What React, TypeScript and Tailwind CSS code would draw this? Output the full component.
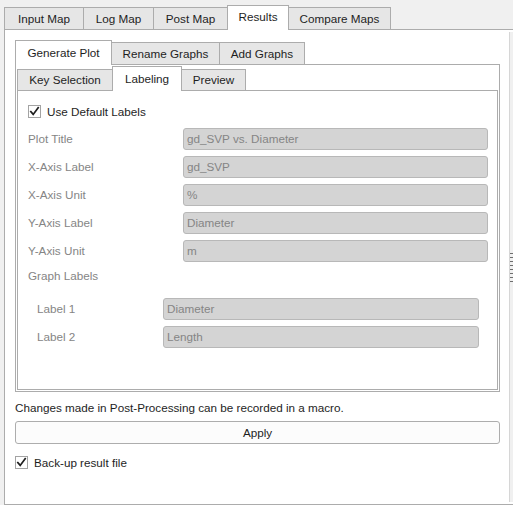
import React from "react";

function Check() {
  return (
    <div className="flex h-[13px] w-[13px] shrink-0 items-center justify-center border border-[#a3a3a3] bg-white">
      <svg width="11" height="11" viewBox="0 0 11 11" fill="none">
        <path d="M1.8 5.6 L4.2 8.4 L9.2 1.6" stroke="#1f1f1f" strokeWidth="1.7" strokeLinecap="square" />
      </svg>
    </div>
  );
}

function Field({ value, className }: { value: string; className: string }) {
  return (
    <div
      className={
        "flex h-[22px] items-center rounded-[3px] border border-[#b8b8b8] bg-[#d4d4d4] pl-[3px] text-[#858585] " +
        className
      }
    >
      {value}
    </div>
  );
}

const mainRows = [
  { label: "Plot Title", value: "gd_SVP vs. Diameter" },
  { label: "X-Axis Label", value: "gd_SVP" },
  { label: "X-Axis Unit", value: "%" },
  { label: "Y-Axis Label", value: "Diameter" },
  { label: "Y-Axis Unit", value: "m" },
];

const graphRows = [
  { label: "Label 1", value: "Diameter" },
  { label: "Label 2", value: "Length" },
];

export default function App() {
  return (
    <div className="h-[505px] w-[513px] overflow-hidden bg-[#f0f0f0] font-['Liberation_Sans',Arial,sans-serif] text-[11.7px] text-[#1e1e1e]">
      {/* top level tabs */}
      <div className="flex h-[29px] items-end pl-[4px]">
        <div className="flex h-[22px] w-[79px] items-center justify-center border-l border-t border-[#acacac] bg-[#e6e6e6]">
          Input Map
        </div>
        <div className="flex h-[22px] w-[70px] items-center justify-center border-l border-t border-[#acacac] bg-[#e6e6e6]">
          Log Map
        </div>
        <div className="flex h-[22px] w-[74px] items-center justify-center border-l border-t border-[#acacac] bg-[#e6e6e6]">
          Post Map
        </div>
        <div className="relative z-10 -mb-px flex h-[25px] w-[62px] items-center justify-center border-x border-t border-[#acacac] bg-white pb-[2px]">
          Results
        </div>
        <div className="flex h-[22px] w-[102px] items-center justify-center border-r border-t border-[#acacac] bg-[#e6e6e6]">
          Compare Maps
        </div>
      </div>

      <div className="ml-[4px] flex h-[476px] border-b border-l border-t border-[#acacac] bg-white">
        <div className="w-[504px] pl-[10px] pt-[10px]">
          {/* second level tabs */}
          <div className="flex h-[24px] items-end">
            <div className="relative z-10 -mb-px flex h-[25px] w-[97px] items-center justify-center border-x border-t border-[#acacac] bg-white pb-[1px]">
              Generate Plot
            </div>
            <div className="flex h-[22px] w-[108px] items-center justify-center border-r border-t border-[#acacac] bg-[#e6e6e6]">
              Rename Graphs
            </div>
            <div className="flex h-[22px] w-[85px] items-center justify-center border-r border-t border-[#acacac] bg-[#e6e6e6]">
              Add Graphs
            </div>
          </div>

          <div className="h-[328px] w-[485px] border border-[#acacac] p-px">
            {/* third level tabs */}
            <div className="flex h-[24px] items-end">
              <div className="flex h-[21px] w-[95px] items-center justify-center border-l border-t border-[#acacac] bg-[#e6e6e6]">
                Key Selection
              </div>
              <div className="relative z-10 -mb-px flex h-[25px] w-[70px] items-center justify-center border-x border-t border-[#acacac] bg-white pb-[1px]">
                Labeling
              </div>
              <div className="flex h-[21px] w-[64px] items-center justify-center border-r border-t border-[#acacac] bg-[#e6e6e6]">
                Preview
              </div>
            </div>

            <div className="h-[300px] border border-[#acacac] pl-[10px] pr-[9px] pt-[14px]">
              <div className="flex h-[13px] items-center gap-[6px]">
                <Check />
                <span>Use Default Labels</span>
              </div>

              <div className="mt-[10px] flex flex-col gap-[6px]">
                {mainRows.map((r) => (
                  <div key={r.label} className="flex h-[22px] items-center">
                    <span className="w-[155px] text-[#858585]">{r.label}</span>
                    <Field value={r.value} className="w-[305px]" />
                  </div>
                ))}
              </div>

              <div className="mt-[3px] flex h-[22px] items-center text-[#858585]">Graph Labels</div>

              <div className="mt-[11px] flex flex-col gap-[6px] pl-[9px]">
                {graphRows.map((r) => (
                  <div key={r.label} className="flex h-[22px] items-center">
                    <span className="w-[126px] text-[#858585]">{r.label}</span>
                    <Field value={r.value} className="w-[316px]" />
                  </div>
                ))}
              </div>
            </div>
          </div>

          <div className="mt-[8px] h-[16px] leading-[16px]">
            Changes made in Post-Processing can be recorded in a macro.
          </div>
          <button className="mt-[5px] flex h-[23px] w-[485px] items-center justify-center rounded-[3px] border border-[#adadad] bg-[#fcfcfc]">
            Apply
          </button>
          <div className="mt-[12px] flex h-[13px] items-center gap-[6px]">
            <Check />
            <span>Back-up result file</span>
          </div>
        </div>

        {/* splitter handle */}
        <div className="my-[2px] flex w-[4px] flex-col items-center justify-center gap-[3px] border-l border-[#d6d6d6] bg-[#f0f0f0]">
          {[0, 1, 2, 3, 4, 5, 6, 7].map((i) => (
            <div key={i} className="h-px w-[3px] bg-[#6e6e6e]" />
          ))}
        </div>
      </div>
    </div>
  );
}
